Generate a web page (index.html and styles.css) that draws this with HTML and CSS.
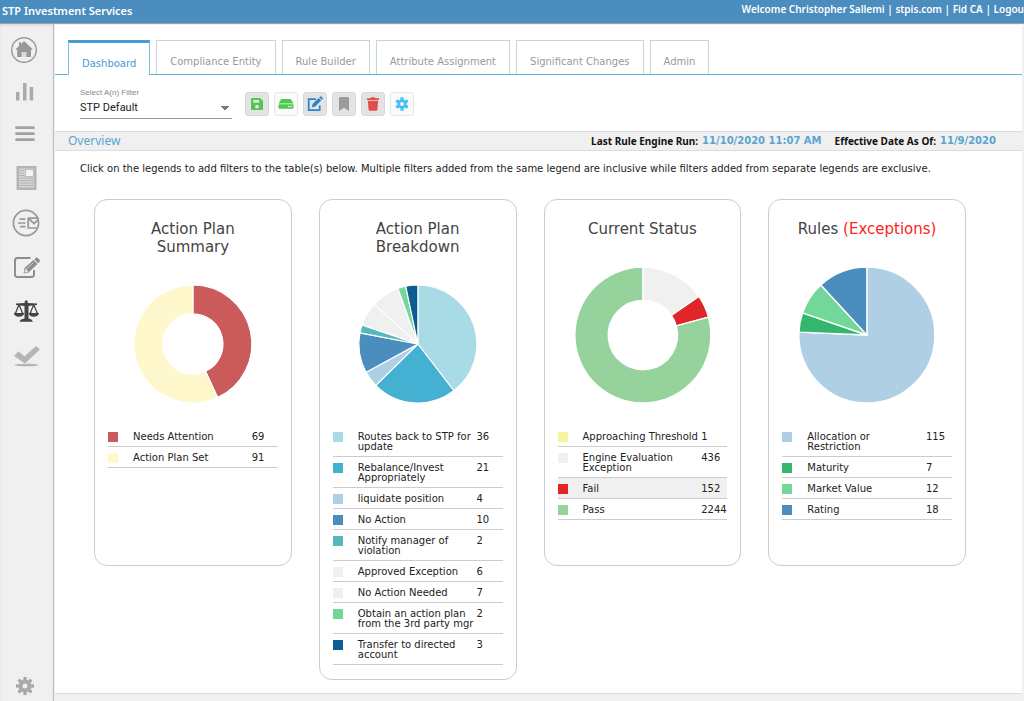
FILE: index.html
```html
<!DOCTYPE html>
<html lang="en">
<head>
<meta charset="utf-8">
<meta name="viewport" content="width=device-width, initial-scale=1">
<title>STP Investment Services</title>
<link rel="stylesheet" href="styles.css">
</head>
<body>
<header class="topbar">
  <span class="brand">STP Investment Services</span>
  <nav class="account" aria-label="Account">
    <span>Welcome Christopher Sallemi</span> | <a href="#site">stpis.com</a> | <a href="#client">Fid CA</a> | <a href="#logout" aria-label="Logout">Logou</a>
  </nav>
</header>
<div class="shell">
  <nav class="sidebar" aria-label="Main">
    <a class="side-link side-short" href="#home" aria-label="Home">
      <svg width="28" height="28" viewBox="0 0 28 28"><circle cx="13" cy="14" r="12.3" fill="none" stroke="#999" stroke-width="1.4"/><path fill="#999" d="M13 5 L21.5 13 L20 14.2 V21 H15.3 V16 H10.7 V21 H6.2 V14.2 L4.8 13 L8 10 V6.3 H10 V8z"/><path d="M12.2 16V21M14 16V21" stroke="#bbb" stroke-width=".8"/></svg>
    </a>
    <a class="side-link side-short" href="#reports" aria-label="Reports">
      <svg width="28" height="28" viewBox="0 0 28 28" fill="#aaa"><path d="M5 14h3.500v8.500H5zM12 5h3.500v17.500H12zM18.700 9h3.500v13.500h-3.500z"/></svg>
    </a>
    <a class="side-link side-short" href="#menu" aria-label="Lists">
      <svg width="28" height="28" viewBox="0 0 28 28" stroke="#a2a2a2" stroke-width="2.800" stroke-linecap="round"><path d="M5.500 7.700h17M5.500 13.700h17M5.500 19.700h17"/></svg>
    </a>
    <a class="side-link side-tall" href="#documents" aria-label="Documents">
      <svg width="28" height="28" viewBox="0 0 28 28"><path fill="#b4b4b4" d="M4.500 2h20v24h-20z"/><path fill="#d4d4d4" d="M7 4.500h15v19H7z"/><path d="M7.500 6.500h5M7.500 9h5M7.500 11.500h5M7.500 14h14M7.500 16.500h14M7.500 19h14M7.500 21.500h14" stroke="#b4b4b4" stroke-width="1"/><path fill="#f4f4f4" stroke="#b4b4b4" stroke-width=".8" d="M13.500 5.500h8v7h-8z"/></svg>
    </a>
    <a class="side-link" href="#messages" aria-label="Messages">
      <svg width="28" height="28" viewBox="0 0 28 28" fill="none" stroke="#999"><circle cx="14" cy="14" r="12.600" stroke-width="1.700"/><path stroke-width="1.700" d="M7.500 10.200h6M6 14h7.500M8 17.700h5.500M26.500 9.200H16.200v9.800H25.500M16.500 9.500l5.500 5 4.500-4"/></svg>
    </a>
    <a class="side-link" href="#edit" aria-label="Edit">
      <svg width="28" height="28" viewBox="0 0 28 28"><path fill="none" stroke="#8c8c8c" stroke-width="1.900" d="M18.500 5H5.500Q3 5 3 7.500V21.500Q3 24 5.500 24H19.500Q22 24 22 21.500V17"/><path fill="#8c8c8c" d="M11.500 20.500l1-5.500L21.500 7l4 4-9 8.500zM22.300 6.300L24 4.800Q25 4.200 26 5.200L27.500 6.800Q28.200 7.800 27.500 8.700L26.200 10.200z"/><path d="M14 16.500l7.500-7M12.800 19.300l1-3 2 2z" fill="#eee" stroke="#eee" stroke-width=".7"/></svg>
    </a>
    <a class="side-link side-current" href="#compliance" aria-label="Compliance" aria-current="page">
      <svg width="28" height="28" viewBox="0 0 28 28" fill="#444"><path d="M12.700 6V4.500Q14.200 2.200 15.700 4.500V6L25 6.500V8L16.500 9V21.500Q20 22 21 24.800H7.500Q8.500 22 12.500 21.500V9L4 8V6.500z"/><path fill="none" stroke="#444" stroke-width="1.500" d="M7 8L3.200 17M7 8l3.800 9M21.700 8L18 17M21.700 8l3.800 9"/><path d="M1.800 16h10.400Q11.500 19.800 7 19.800T1.800 16zM16.600 16H27Q26.300 19.800 21.800 19.800T16.600 16z"/><path fill="#eee" d="M4.500 15.200h5L7 9.800zM19.300 15.200h5l-2.600-5.400z"/></svg>
    </a>
    <a class="side-link" href="#tasks" aria-label="Tasks">
      <svg width="28" height="28" viewBox="0 0 28 28"><path fill="#b5b5b5" d="M2 15L6.500 10.500 12.500 15.500 24 5 28 8.500 13 22.500z"/><path d="M2 15L6.500 10.500 12.500 15.500 24 5" fill="none" stroke="#ccc"/><ellipse cx="14.500" cy="24" rx="12" ry="1.300" fill="#b5b5b5"/></svg>
    </a>
    <a class="side-link side-settings" href="#settings" aria-label="Settings">
      <svg width="28" height="28" viewBox="0 0 28 28"><circle cx="14" cy="14" r="7.600" fill="none" stroke="#a2a2a2" stroke-width="3" stroke-dasharray="3 3" stroke-dashoffset="1.500" pathLength="48"/><circle cx="14" cy="14" r="4.600" fill="none" stroke="#aaa" stroke-width="4.200"/></svg>
    </a>
  </nav>
  <main class="page">
    <nav class="tabs" aria-label="Sections">
      <a class="tab tab-active" href="#dashboard" aria-current="page">Dashboard</a>
      <a class="tab" href="#entity">Compliance Entity</a>
      <a class="tab" href="#rules">Rule Builder</a>
      <a class="tab" href="#attributes">Attribute Assignment</a>
      <a class="tab" href="#changes">Significant Changes</a>
      <a class="tab" href="#admin">Admin</a>
    </nav>
    <div class="toolbar">
      <div class="field">
        <label class="field-label" for="filter">Select A(n) Filter</label>
        <select class="field-select" id="filter"><option>STP Default</option></select>
      </div>
      <div class="actions">
        <button class="action action-dim" type="button" aria-label="Save"><svg width="14" height="14" viewBox="0 0 14 14"><path fill="#4fc84f" fill-rule="evenodd" d="M2 1h8l3 3v8q0 1-1 1H2q-1 0-1-1V2q0-1 1-1zM3.200 3v2.800h6V3zM7 7.800a1.900 1.900 0 1 0 .01 0z"/></svg></button>
        <button class="action" type="button" aria-label="Storage"><svg width="16" height="14" viewBox="0 0 16 14"><path fill="#4fc84f" d="M4 2h8q.8 0 1.200.7L15.500 6.500H.5L2.800 2.700Q3.200 2 4 2zM1.500 7.300h13q1 0 1 1v2.500q0 1-1 1h-13q-1 0-1-1V8.300q0-1 1-1z"/><circle cx="10.700" cy="9.500" r=".8" fill="#fff"/><circle cx="13.200" cy="9.500" r=".8" fill="#fff"/></svg></button>
        <button class="action action-dim" type="button" aria-label="Edit filter"><svg width="16" height="16" viewBox="0 0 16 16"><path fill="none" stroke="#2b84c6" stroke-width="1.700" d="M9 3.200H1.700v11h11V9.500"/><path fill="#2b84c6" d="M5 11.300l.5-3.200L11.600 2l2.600 2.600L8 10.800zM12.300 1.300l.8-.8q.6-.5 1.200 0l1.400 1.400q.5.600 0 1.200l-.8.800z"/></svg></button>
        <button class="action action-dim" type="button" aria-label="Bookmark"><svg width="14" height="16" viewBox="0 0 14 16"><path fill="#9b9b9b" d="M2 2q0-1 1-1h8q1 0 1 1v13l-5-3.300L2 15z"/></svg></button>
        <button class="action action-dim" type="button" aria-label="Delete"><svg width="14" height="14" viewBox="0 0 14 14"><path fill="#e04f4b" d="M1 1.300h3.600L5.500.2h3l.9 1.100H13v1.600H1zM1.800 3.800h10.400l-.8 9q-.1 1-1.100 1H3.700q-1 0-1.100-1z"/></svg></button>
        <button class="action" type="button" aria-label="Configure"><svg width="14" height="14" viewBox="0 0 14 14"><circle cx="7" cy="7" r="3.300" fill="none" stroke="#45bdf5" stroke-width="2.800"/><path stroke="#45bdf5" stroke-width="3.200" d="M7 .3v2.500M7 11.200v2.500M1.200 3.700l2.200 1.200M10.600 9.100l2.200 1.200M1.200 10.300l2.200-1.200M10.600 4.900l2.200-1.200"/></svg></button>
      </div>
    </div>
    <div class="overview">
      <h1 class="overview-title">Overview</h1>
      <p class="stamp">Last Rule Engine Run: <span class="stamp-value">11/10/2020 11:07 AM</span></p>
      <p class="stamp">Effective Date As Of: <span class="stamp-value">11/9/2020</span></p>
    </div>
    <p class="hint">Click on the legends to add filters to the table(s) below. Multiple filters added from the same legend are inclusive while filters added from separate legends are exclusive.</p>
    <div class="cards">
      <section class="card" data-hole="0.51">
        <div class="figure"><h2 class="card-title">Action Plan<br>Summary</h2><svg class="chart" viewBox="-100 -100 200 200" role="img" aria-label="Action Plan Summary chart"></svg></div>
        <table class="legend"><tbody>
          <tr><td><i class="swatch red"></i></td><td>Needs Attention</td><td>69</td></tr>
          <tr><td><i class="swatch cream"></i></td><td>Action Plan Set</td><td>91</td></tr>
        </tbody></table>
      </section>
      <section class="card" data-hole="0">
        <div class="figure"><h2 class="card-title">Action Plan<br>Breakdown</h2><svg class="chart" viewBox="-100 -100 200 200" role="img" aria-label="Action Plan Breakdown chart"></svg></div>
        <table class="legend"><tbody>
          <tr><td><i class="swatch aqua"></i></td><td>Routes back to STP for update</td><td>36</td></tr>
          <tr><td><i class="swatch cyan"></i></td><td>Rebalance/Invest Appropriately</td><td>21</td></tr>
          <tr><td><i class="swatch sky"></i></td><td>liquidate position</td><td>4</td></tr>
          <tr><td><i class="swatch blue"></i></td><td>No Action</td><td>10</td></tr>
          <tr><td><i class="swatch teal"></i></td><td>Notify manager of violation</td><td>2</td></tr>
          <tr><td><i class="swatch grey"></i></td><td>Approved Exception</td><td>6</td></tr>
          <tr><td><i class="swatch grey"></i></td><td>No Action Needed</td><td>7</td></tr>
          <tr><td><i class="swatch mint"></i></td><td>Obtain an action plan from the 3rd party mgr</td><td>2</td></tr>
          <tr><td><i class="swatch navy"></i></td><td>Transfer to directed account</td><td>3</td></tr>
        </tbody></table>
      </section>
      <section class="card" data-hole="0.51">
        <div class="figure"><h2 class="card-title">Current Status</h2><svg class="chart" viewBox="-100 -100 200 200" role="img" aria-label="Current Status chart"></svg></div>
        <table class="legend"><tbody>
          <tr><td><i class="swatch yellow"></i></td><td>Approaching Threshold</td><td>1</td></tr>
          <tr><td><i class="swatch grey"></i></td><td>Engine Evaluation Exception</td><td>436</td></tr>
          <tr class="picked"><td><i class="swatch scarlet"></i></td><td>Fail</td><td>152</td></tr>
          <tr><td><i class="swatch sage"></i></td><td>Pass</td><td>2244</td></tr>
        </tbody></table>
      </section>
      <section class="card" data-hole="0">
        <div class="figure"><h2 class="card-title">Rules <span class="exceptions">(Exceptions)</span></h2><svg class="chart" viewBox="-100 -100 200 200" role="img" aria-label="Rules chart"></svg></div>
        <table class="legend"><tbody>
          <tr><td><i class="swatch sky"></i></td><td>Allocation or Restriction</td><td>115</td></tr>
          <tr><td><i class="swatch green"></i></td><td>Maturity</td><td>7</td></tr>
          <tr><td><i class="swatch mint"></i></td><td>Market Value</td><td>12</td></tr>
          <tr><td><i class="swatch blue"></i></td><td>Rating</td><td>18</td></tr>
        </tbody></table>
      </section>
    </div>
    <div class="page-end"></div>
  </main>
</div>
<script src="charts.js"></script>
</body>
</html>
```

FILE: charts.js
```js
// Draws each card's pie or ring from the rows of its legend, clockwise from the top.
const NS = 'http://www.w3.org/2000/svg';
const point = (turn, r) => {
  const a = turn * 2 * Math.PI;
  return `${Math.sin(a) * r} ${-Math.cos(a) * r}`;
};
document.querySelectorAll('.card').forEach((card) => {
  const hole = Number(card.dataset.hole) * 100;
  const rows = [...card.querySelectorAll('.legend tr')].map((row) => ({
    value: Number(row.cells[2].textContent),
    color: getComputedStyle(row.querySelector('.swatch')).backgroundColor,
  })).filter((row) => row.value > 1);
  const total = rows.reduce((sum, row) => sum + row.value, 0);
  let from = 0;
  rows.forEach((row) => {
    const to = from + row.value / total;
    const large = to - from > 0.5 ? 1 : 0;
    const path = document.createElementNS(NS, 'path');
    path.setAttribute('d', `M${point(from, hole)} L${point(from, 100)} A100 100 0 ${large} 1 ${point(to, 100)} L${point(to, hole)} A${hole} ${hole} 0 ${large} 0 ${point(from, hole)}Z`);
    path.setAttribute('fill', row.color);
    path.setAttribute('class', 'slice');
    card.querySelector('.chart').append(path);
    from = to;
  });
});
```

FILE: styles.css
```css
* { box-sizing: border-box; }
body {
  margin: 0;
  min-height: 100vh;
  display: flex;
  flex-direction: column;
  background: #f0f0f0;
  color: #222;
  font: 10px/12px "DejaVu Sans", sans-serif;
}
a { color: inherit; text-decoration: none; }
p, h1, h2 { margin: 0; font-weight: normal; }

.topbar {
  display: flex;
  justify-content: space-between;
  height: 24px;
  padding: 0 0 0 2px;
  background: #4b8dbe;
  border-bottom: 1px solid #8fa5b5;
  color: #fff;
  font-family: "Noto Sans", sans-serif;
  font-weight: 600;
  white-space: nowrap;
}
.brand { font-size: 11px; line-height: 21px; }
.account { font-size: 10px; line-height: 18px; }

.shell { flex: 1; display: flex; }
.sidebar {
  display: flex;
  flex-direction: column;
  width: 54px;
  padding-top: 5px;
  border-right: 1px solid #bbb;
  box-shadow: inset 0 2px 2px #ddd;
}
.side-link {
  display: flex;
  align-items: center;
  height: 44px;
  padding-left: 12px;
}
.side-short { height: 42px; padding-left: 11px; }
.side-tall { height: 46px; }
.side-settings { height: 30px; margin-top: auto; padding-left: 11px; }

.page {
  flex: 1;
  display: flex;
  flex-direction: column;
  min-width: 0;
  margin: 1px 2px 0 1px;
  background: #fff;
}
.tabs {
  display: flex;
  gap: 6px;
  padding: 15px 13px 0;
  border-bottom: 1px solid #62b2dc;
}
.tab {
  height: 34px;
  padding: 15px 13px 0;
  border: 1px solid #c9d5dc;
  border-bottom: 0;
  color: #999;
  white-space: nowrap;
}
.tab-active {
  height: 35px;
  margin-bottom: -1px;
  border-color: #7fbfe2;
  border-top: 3px solid #449bd8;
  background: #fff;
  color: #449bd8;
}

.toolbar {
  display: flex;
  gap: 13px;
  padding: 13px 25px 12px;
}
.field {
  display: flex;
  flex-direction: column;
  width: 152px;
  height: 31px;
  border-bottom: 1px solid #949494;
  font-family: "Liberation Sans", sans-serif;
}
.field-label { font-size: 8px; line-height: 10px; color: #888; }
.field-select {
  height: 20px;
  padding: 0;
  border: 0;
  appearance: none;
  background: linear-gradient(to bottom right, #777 50%, transparent 52%) right 3px center / 4px 4px no-repeat,
    linear-gradient(to bottom left, #777 50%, transparent 52%) right 7px center / 4px 4px no-repeat;
  color: #222;
  font: 11px/20px Roboto, sans-serif;
}
.actions { display: flex; gap: 5px; padding-top: 4px; }
.action {
  display: flex;
  align-items: center;
  justify-content: center;
  width: 24px;
  height: 24px;
  padding: 0;
  border: 1px solid #e8e8e8;
  border-radius: 3px;
  background: #fafafa;
}
.action-dim { border-color: #d8d8d8; background: #e3e3e3; }

.overview {
  display: flex;
  align-items: center;
  gap: 13px;
  height: 20px;
  padding: 0 26px 0 13px;
  border: solid #dcdcdc;
  border-width: 1px 0;
  background: #f0f0f0;
}
.overview-title { flex: 1; color: #5ba4d0; font: 12px/18px "Noto Sans", sans-serif; }
.stamp { display: flex; gap: 4px; color: #111; font-family: "Noto Sans", sans-serif; font-weight: bold; }
.stamp-value { color: #5ba4d0; font-family: "DejaVu Sans", sans-serif; }
.hint { padding: 12px 25px 0; }

.cards {
  display: grid;
  grid-template-columns: repeat(4, minmax(0, 1fr));
  align-items: start;
  gap: 27px;
  padding: 24px 56px 13px 39px;
}
.card {
  min-height: 367px;
  padding: 0 13px 14px;
  border: 1px solid #ccc;
  border-radius: 13px;
}
.figure {
  display: flex;
  flex-direction: column;
  gap: 29px;
  height: 226px;
  padding: 20px 0 23px;
}
.card-title { color: #444; font-size: 15px; line-height: 18px; text-align: center; }
.exceptions { color: #f22; }
.chart { flex: 1; width: 100%; min-height: 0; overflow: visible; }
.slice { stroke: #fff; stroke-width: 2; stroke-linejoin: round; }

.legend {
  width: 100%;
  table-layout: fixed;
  border-collapse: separate;
  border-spacing: 0;
  line-height: 10px;
}
.legend td {
  padding: 6px 0 4px;
  border-bottom: 1px solid #ccc;
  vertical-align: top;
}
.legend td:first-child { width: 25px; }
.legend td:last-child { width: 26px; }
.picked { background: #f0f0f0; }
.swatch { display: block; width: 10px; height: 10px; }

.red { background: #cb5b5b; }
.cream { background: #fff8cc; }
.aqua { background: #a8dbe6; }
.cyan { background: #44b1d2; }
.sky { background: #afcfe5; }
.blue { background: #4b8dbd; }
.teal { background: #55b9bb; }
.grey { background: #f0f0f0; }
.mint { background: #74d79a; }
.navy { background: #0e5c94; }
.yellow { background: #f4f4a0; }
.scarlet { background: #e12629; }
.sage { background: #95d29c; }
.green { background: #34b76c; }

.page-end { flex: 1; border-top: 1px solid #ddd; background: #f0f0f0; }
```
